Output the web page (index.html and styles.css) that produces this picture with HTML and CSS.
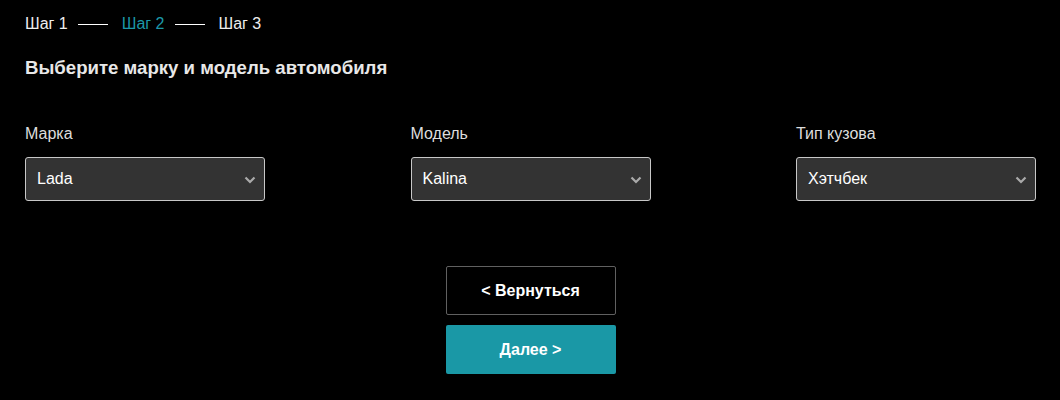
FILE: index.html
```html
<!DOCTYPE html>
<html lang="ru">
<head>
<meta charset="utf-8">
<link rel="stylesheet" href="styles.css">
</head>
<body>
<div class="page">
  <nav class="steps">
    <span class="step">Шаг 1</span>
    <span class="sep"></span>
    <span class="step active">Шаг 2</span>
    <span class="sep"></span>
    <span class="step">Шаг 3</span>
  </nav>
  <h1 class="title">Выберите марку и модель автомобиля</h1>
  <div class="fields">
    <div class="field">
      <label class="label">Марка</label>
      <div class="select"><span>Lada</span>
        <svg class="chev" width="12" height="8" viewBox="0 0 12 8"><path d="M1.5 1.5 L6 6 L10.5 1.5" fill="none" stroke="#aaa" stroke-width="2.2"/></svg>
      </div>
    </div>
    <div class="field">
      <label class="label">Модель</label>
      <div class="select"><span>Kalina</span>
        <svg class="chev" width="12" height="8" viewBox="0 0 12 8"><path d="M1.5 1.5 L6 6 L10.5 1.5" fill="none" stroke="#aaa" stroke-width="2.2"/></svg>
      </div>
    </div>
    <div class="field">
      <label class="label">Тип кузова</label>
      <div class="select"><span>Хэтчбек</span>
        <svg class="chev" width="12" height="8" viewBox="0 0 12 8"><path d="M1.5 1.5 L6 6 L10.5 1.5" fill="none" stroke="#aaa" stroke-width="2.2"/></svg>
      </div>
    </div>
  </div>
  <div class="actions">
    <button class="btn btn-back">&lt; Вернуться</button>
    <button class="btn btn-next">Далее &gt;</button>
  </div>
</div>
</body>
</html>
```
FILE: styles.css
```css
* { box-sizing: border-box; }
html, body { margin: 0; background: #000; }
body { font-family: "Liberation Sans", Arial, sans-serif; color: #fff; }
.page { padding: 15px 24px 0 25px; }
.steps { display: flex; align-items: center; font-size: 16px; line-height: 18px; }
.step { color: #eee; }
.step.active { color: #1c98a8; }
.sep { width: 30px; height: 1px; background: #fff; margin: 0 14px 0 10px; }
.title { margin: 24px 0 0 0; font-size: 18.6px; line-height: 21px; font-weight: bold; color: #e8e8e8; }
.fields { display: flex; justify-content: space-between; margin-top: 47px; }
.field { width: 240px; display: flex; flex-direction: column; }
.label { font-size: 16px; line-height: 18px; color: #ddd; }
.select { margin-top: 14px; height: 44px; background: #333; border: 1px solid #c8c8c8; border-radius: 3px; display: flex; align-items: center; justify-content: space-between; padding: 0 8px 0 11px; font-size: 16px; color: #fff; }
.chev { display: block; margin-top: 1px; }
.actions { display: flex; flex-direction: column; align-items: center; gap: 10px; margin-top: 65px; }
.btn { width: 170px; height: 49px; font-family: inherit; font-size: 16px; font-weight: bold; color: #fff; border-radius: 2px; cursor: pointer; }
.btn-back { background: #000; border: 1px solid #606060; }
.btn-next { background: #1a98a6; border: none; }
```
